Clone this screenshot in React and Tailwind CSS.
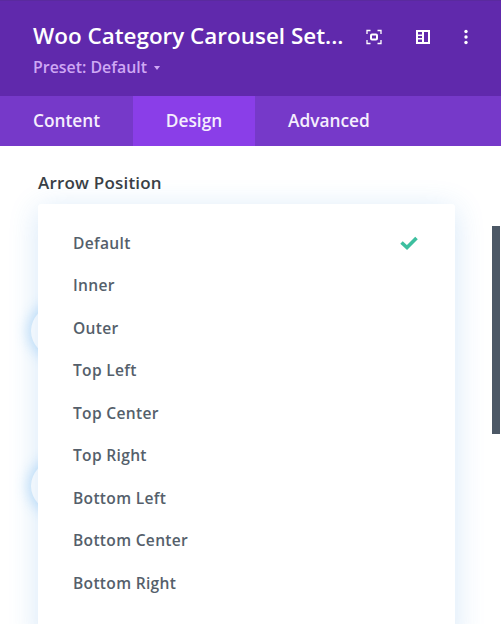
import React from 'react'

const options = ['Default', 'Inner', 'Outer', 'Top Left', 'Top Center', 'Top Right', 'Bottom Left', 'Bottom Center', 'Bottom Right']

function HeaderIcons() {
  return (
    <div className="flex items-center gap-[33px] pr-[33px] pt-[1px] text-white">
      <svg width="16" height="16" viewBox="0 0 16 16" fill="none" stroke="currentColor" strokeWidth="1.3">
        <path d="M1 5V1.5h3.5M11.500 1.500H15V5M15 11v3.500h-3.500M4.500 14.500H1V11" />
        <rect x="5" y="5.500" width="6" height="5" rx="1" strokeWidth="2" />
      </svg>
      <svg width="16" height="16" viewBox="0 0 16 16" fill="currentColor">
        <path fillRule="evenodd" d="M1 1h14v14H1zM9 3v10h4V3zM3 3v2.500h4V3zM3 7v2h4V7zM3 10.500V13h4v-2.500z" />
      </svg>
      <svg width="4" height="16" viewBox="0 0 4 16" fill="currentColor">
        <circle cx="2" cy="2.500" r="1.700" />
        <circle cx="2" cy="8" r="1.700" />
        <circle cx="2" cy="13.500" r="1.700" />
      </svg>
    </div>
  )
}

export default function App() {
  return (
    <div className="relative w-[501px] h-[624px] overflow-hidden bg-white font-['Open_Sans',sans-serif]">
      <div className="h-[96px] bg-[#6029ac] border-t border-[#5a2a9e] flex items-start justify-between pt-[20px]">
        <div className="pl-[33px]">
          <div className="text-[22.450px] leading-[30px] font-semibold text-white whitespace-nowrap">Woo Category Carousel Set...</div>
          <div className="mt-[6px] flex items-center gap-[7px] text-[15.900px] leading-[20px] font-semibold text-[#cfa8f4]">
            Preset: Default
            <span className="mt-[2px] w-0 h-0 border-x-[3.5px] border-x-transparent border-t-[4px] border-t-[#cfa8f4]" />
          </div>
        </div>
        <div className="pt-[7px]">
          <HeaderIcons />
        </div>
      </div>

      <div className="h-[50px] bg-[#7639c9] flex text-[17.300px] font-semibold text-[#f5eefd]">
        <div className="w-[133px] pl-[33px] flex items-center">Content</div>
        <div className="w-[122px] bg-[#8a3ee8] flex items-center justify-center">Design</div>
        <div className="pl-[33px] flex items-center">Advanced</div>
      </div>

      <div className="absolute left-[31px] top-[306px] w-[50px] h-[50px] rounded-full bg-white shadow-[0_0_14px_3px_rgba(125,190,245,0.45)]" />
      <div className="absolute left-[31px] top-[461px] w-[50px] h-[50px] rounded-full bg-white shadow-[0_0_14px_3px_rgba(125,190,245,0.45)]" />
      <div className="absolute right-[1px] top-[226px] w-[8px] h-[208px] bg-[#4c5866]" />

      <div className="pl-[38px] pt-[25px]">
        <div className="text-[17px] leading-[24px] font-semibold tracking-[0.2px] text-[#3a3f45]">Arrow Position</div>
        <div className="relative mt-[9px] w-[417px] h-[440px] rounded-[3px] bg-white pt-[18px] shadow-[0_5px_30px_rgba(43,135,218,0.2)]">
          {options.map((option, i) => (
            <div key={option} className="h-[42.5px] pl-[35px] pr-[37px] flex items-center justify-between text-[15.600px] font-semibold tracking-[0.3px] text-[#555f6b]">
              {option}
              {i === 0 && (
                <svg width="18" height="14" viewBox="0 0 18 14" fill="none" stroke="#3dbf9f" strokeWidth="3.600">
                  <path d="M1.500 6.500l5.500 5 9.500-9.500" />
                </svg>
              )}
            </div>
          ))}
        </div>
      </div>
    </div>
  )
}
